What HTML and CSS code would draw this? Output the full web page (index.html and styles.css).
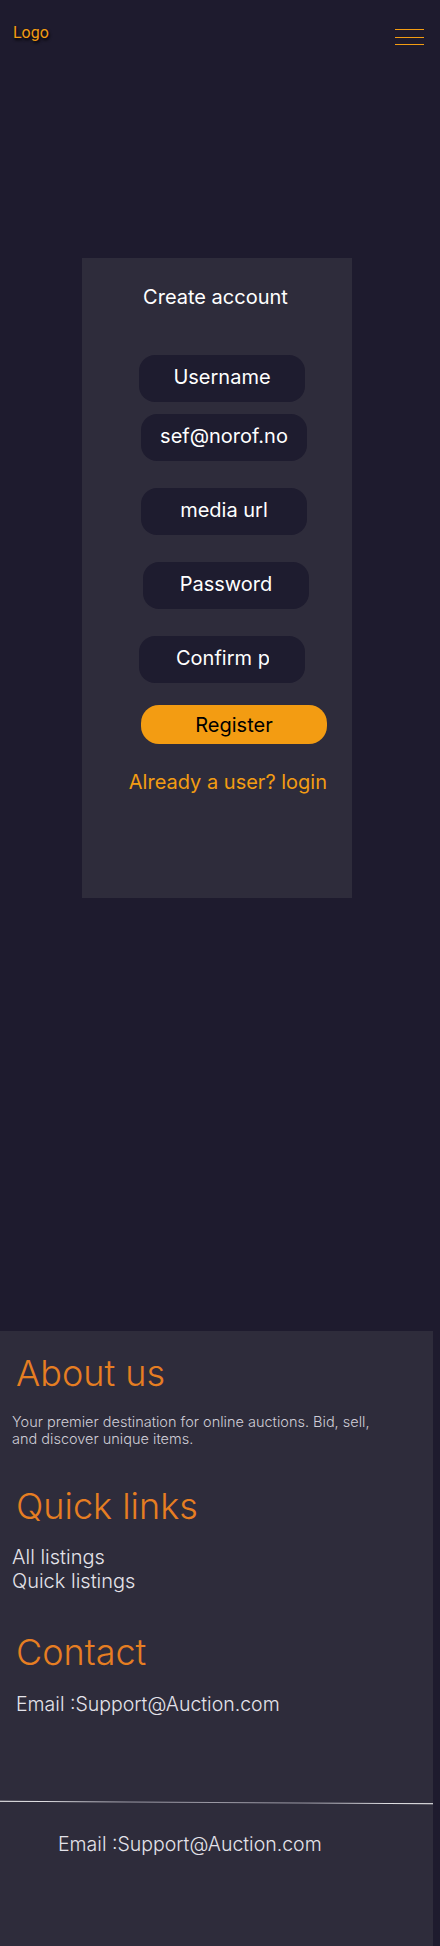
FILE: index.html
```html
<!DOCTYPE html>
<html lang="en">
<head>
<meta charset="utf-8">
<title>Create account</title>
<link rel="stylesheet" href="styles.css">
</head>
<body>
<header class="site-header">
  <a class="logo" href="#">Logo</a>
  <button class="menu-toggle" aria-label="Menu">
    <span class="menu-line"></span>
    <span class="menu-line"></span>
    <span class="menu-line"></span>
  </button>
</header>

<main class="main">
  <section class="card">
    <h1 class="card-title">Create account</h1>
    <form class="form">
      <input class="field" type="text" placeholder="Username">
      <input class="field field-email shift-2" type="email" placeholder="sef@norof.no">
      <input class="field field-gap shift-2" type="url" placeholder="media url">
      <input class="field field-gap shift-4" type="password" placeholder="Password">
      <input class="field field-gap field-clip" type="password" placeholder="Confirm password">
      <button class="register" type="button">Register</button>
      <a class="login-link" href="#">Already a user? login</a>
    </form>
  </section>
</main>

<footer class="site-footer">
  <h2 class="footer-heading">About us</h2>
  <p class="footer-about">Your premier destination for online auctions. Bid, sell, and discover unique items.</p>
  <h2 class="footer-heading footer-heading-gap">Quick links</h2>
  <ul class="footer-links">
    <li><a href="#">All listings</a></li>
    <li><a href="#">Quick listings</a></li>
  </ul>
  <h2 class="footer-heading footer-heading-gap">Contact</h2>
  <p class="footer-email">Email :Support@Auction.com</p>
  <div class="footer-divider"></div>
  <p class="footer-email footer-email-bottom">Email :Support@Auction.com</p>
</footer>
</body>
</html>
```

FILE: styles.css
```css
* {
  box-sizing: border-box;
}

html, body {
  margin: 0;
  padding: 0;
}

body {
  background: #1e1b2e;
  font-family: Inter, "Noto Sans", sans-serif;
  color: #ffffff;
  min-height: 1946px;
  display: flex;
  flex-direction: column;
}

/* Header */
.site-header {
  display: flex;
  justify-content: space-between;
  align-items: flex-start;
  height: 70px;
  padding: 0 16px 0 13px;
}

.logo {
  margin-top: 21px;
  font-family: Roboto, Inter, sans-serif;
  font-size: 16px;
  line-height: 24px;
  color: #f39c12;
  text-decoration: none;
  text-shadow: 1px 2px 3px #000;
}

.menu-toggle {
  display: flex;
  flex-direction: column;
  gap: 6.5px;
  padding: 0;
  margin-top: 29px;
  background: none;
  border: 0;
  width: 29px;
}

.menu-line {
  display: block;
  width: 29px;
  height: 1px;
  background: #f39c12;
}

/* Main */
.main {
  display: flex;
  justify-content: center;
  padding: 188px 6px 0 0;
  height: 1261px;
}

.card {
  width: 270px;
  height: 640px;
  background: #2e2c3b;
  padding-top: 27px;
}

.card-title {
  margin: 0;
  font-size: 20px;
  font-weight: 400;
  line-height: 24px;
  text-align: center;
  padding-right: 3px;
}

.form {
  display: flex;
  flex-direction: column;
  align-items: flex-start;
  padding: 46px 25px 0 57px;
}

.field {
  width: 166px;
  height: 47px;
  border: 0;
  border-radius: 16px;
  background: #1e1c2f;
  color: #ffffff;
  font-family: Inter, sans-serif;
  font-size: 20px;
  font-weight: 400;
  text-align: center;
  padding: 0 16px 3px;
  outline: none;
}

.field::placeholder {
  color: #ffffff;
  opacity: 1;
}

.field-clip {
  text-align: left;
  padding: 0 36px 3px 37px;
}

.field-email {
  margin-top: 12px;
}

.field-gap {
  margin-top: 27px;
}

.shift-2 {
  margin-left: 2px;
}

.shift-4 {
  margin-left: 4px;
}

.register {
  align-self: flex-end;
  margin-top: 22px;
  width: 186px;
  height: 39px;
  border: 0;
  border-radius: 18px;
  background: #f39c12;
  color: #000000;
  font-family: Inter, sans-serif;
  font-size: 20px;
  font-weight: 400;
  line-height: 24px;
  padding: 0;
}

.login-link {
  align-self: flex-end;
  margin-top: 26px;
  font-size: 20px;
  line-height: 24px;
  font-weight: 400;
  color: #f39c12;
  text-decoration: none;
  white-space: nowrap;
}

/* Footer */
.site-footer {
  width: 433px;
  flex: 1;
  background: #2e2c3b;
  padding: 19px 0 40px 12px;
  font-weight: 300;
}

.footer-heading {
  margin: 0 0 0 4px;
  font-size: 36px;
  font-weight: 300;
  line-height: 46px;
  color: #e67e22;
}

.footer-heading-gap {
  margin-top: 36px;
}

.footer-about {
  margin: 17px 0 0;
  font-size: 14.5px;
  line-height: 17px;
  color: #cfcdd6;
  max-width: 385px;
}

.footer-links {
  list-style: none;
  margin: 16px 0 0;
  padding: 0;
}

.footer-links a {
  font-size: 20px;
  line-height: 24px;
  color: #e4e3ea;
  text-decoration: none;
}

.footer-email {
  margin: 17px 0 0 4px;
  font-size: 19.5px;
  line-height: 24px;
  color: #e4e3ea;
}

.footer-divider {
  height: 1px;
  margin: 86px 0 0 -12px;
  background: linear-gradient(90deg, #ffffff, #9a98a4 30%, #9a98a4 70%, #ffffff);
  transform: rotate(0.3deg);
}

.footer-email-bottom {
  margin: 29px 0 0 46px;
}
```
